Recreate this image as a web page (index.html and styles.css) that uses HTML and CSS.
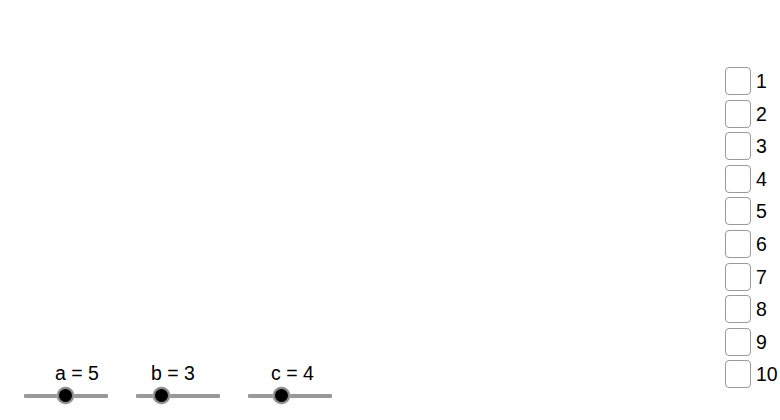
FILE: index.html
```html
<!DOCTYPE html>
<html>
<head>
<meta charset="utf-8">
<link rel="stylesheet" href="styles.css">
</head>
<body>
<div class="canvas">
  <div class="main">
    <div class="sliders">
      <div class="slider s-a">
        <div class="label">a = 5</div>
        <div class="track"><span class="knob" style="left:42px"></span></div>
      </div>
      <div class="slider s-b">
        <div class="label">b = 3</div>
        <div class="track"><span class="knob" style="left:26px"></span></div>
      </div>
      <div class="slider s-c">
        <div class="label">c = 4</div>
        <div class="track"><span class="knob" style="left:34px"></span></div>
      </div>
    </div>
  </div>
  <div class="checks">
    <label class="check"><span class="box"></span><span class="num">1</span></label>
    <label class="check"><span class="box"></span><span class="num">2</span></label>
    <label class="check"><span class="box"></span><span class="num">3</span></label>
    <label class="check"><span class="box"></span><span class="num">4</span></label>
    <label class="check"><span class="box"></span><span class="num">5</span></label>
    <label class="check"><span class="box"></span><span class="num">6</span></label>
    <label class="check"><span class="box"></span><span class="num">7</span></label>
    <label class="check"><span class="box"></span><span class="num">8</span></label>
    <label class="check"><span class="box"></span><span class="num">9</span></label>
    <label class="check"><span class="box"></span><span class="num">10</span></label>
  </div>
</div>
</body>
</html>
```
FILE: styles.css
```css
html, body {
  margin: 0;
  padding: 0;
  background: #ffffff;
}
body {
  font-family: "Liberation Sans", Arial, sans-serif;
  color: #000;
}
.canvas {
  width: 780px;
  height: 420px;
  display: flex;
  overflow: hidden;
}
.main {
  flex: 1;
  display: flex;
  flex-direction: column;
  justify-content: flex-end;
  padding: 0 0 22px 24px;
}
.sliders {
  display: flex;
  gap: 28px;
}
.slider {
  width: 84px;
  display: flex;
  flex-direction: column;
}
.label {
  font-size: 19.5px;
  line-height: 22px;
  height: 22px;
  margin-bottom: 10px;
  white-space: nowrap;
}
.s-a .label { padding-left: 31px; }
.s-b .label { padding-left: 15px; }
.s-c .label { padding-left: 23px; }
.track {
  position: relative;
  height: 4px;
  background: #999999;
  border-radius: 1px;
}
.knob {
  position: absolute;
  top: 2px;
  width: 13px;
  height: 13px;
  margin: -9px 0 0 -9px;
  border-radius: 50%;
  background: #000;
  border: 2.5px solid #8a8a8a;
  box-shadow: 0 0 0 0.5px #bdbdbd;
}
.checks {
  width: 55px;
  padding-top: 67px;
  display: flex;
  flex-direction: column;
}
.check {
  display: flex;
  height: 32.6px;
  align-items: flex-start;
}
.box {
  width: 24px;
  height: 26px;
  border: 1px solid #9a9a9a;
  border-radius: 4px;
  background: #fff;
  flex: none;
}
.num {
  font-size: 19.5px;
  line-height: 28px;
  margin-left: 5px;
}
```
